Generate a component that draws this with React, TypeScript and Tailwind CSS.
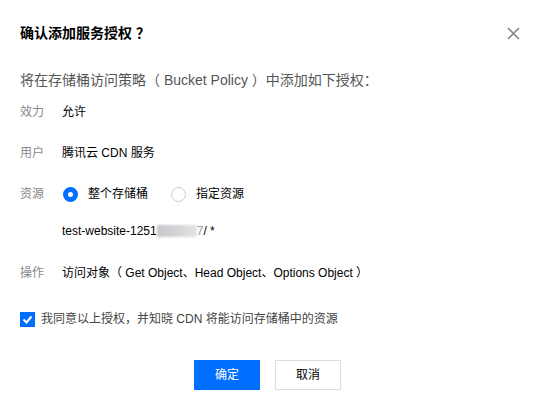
import React, { useState } from "react";

const font = { fontFamily: '"Liberation Sans", "Noto Sans CJK SC", sans-serif' };

function Radio({ checked, label, onClick }: { checked: boolean; label: string; onClick: () => void }) {
  return (
    <label className="flex items-center cursor-pointer" onClick={onClick}>
      <span
        className={
          checked
            ? "w-[15px] h-[15px] rounded-full border-[5px] border-[#006eff] bg-white"
            : "w-[15px] h-[15px] rounded-full border border-[#ccc] bg-white"
        }
      />
      <span className="ml-[10px] text-[12px] text-black">{label}</span>
    </label>
  );
}

export default function App() {
  const [scope, setScope] = useState("all");
  const [agree, setAgree] = useState(true);

  return (
    <div className="w-[542px] h-[407px] overflow-hidden bg-white px-5" style={font}>
      {/* header */}
      <div className="flex items-center justify-between h-5 mt-[23px]">
        <h3 className="text-[14px] font-bold text-black">确认添加服务授权 ？</h3>
        <button className="w-4 h-4 flex items-center justify-center mr-[1px] text-[#888]">
          <svg width="13" height="13" viewBox="0 0 13 13">
            <path d="M1 1L12 12M12 1L1 12" stroke="currentColor" strokeWidth="1.7" />
          </svg>
        </button>
      </div>

      <p className="h-5 flex items-center mt-[27px] text-[14px] text-[#555]">
        将在存储桶访问策略（ Bucket Policy ）中添加如下授权：
      </p>

      <div className="h-5 flex items-center mt-[12px] text-[12px]">
        <span className="w-[42px] text-[#888]">效力</span>
        <span className="text-black">允许</span>
      </div>

      <div className="h-5 flex items-center mt-[21px] text-[12px]">
        <span className="w-[42px] text-[#888]">用户</span>
        <span className="text-black">腾讯云 CDN 服务</span>
      </div>

      <div className="h-5 flex items-center mt-[21px] text-[12px]">
        <span className="w-[43px] text-[#888]">资源</span>
        <div className="flex items-center gap-[23px]">
          <Radio checked={scope === "all"} label="整个存储桶" onClick={() => setScope("all")} />
          <Radio checked={scope === "custom"} label="指定资源" onClick={() => setScope("custom")} />
        </div>
      </div>

      <div className="h-5 flex items-center mt-[17px] text-[12px] pl-[42px] text-black">
        test-website-1251
        <span className="inline-block w-[40px] h-[12px] bg-gradient-to-r from-[#c8c8cc] via-[#d4d4d8] to-[#e4e4e4] blur-[1px]" />
        <span className="text-[#999]">7</span>/ *
      </div>

      <div className="h-5 flex items-center mt-[22px] text-[12px]">
        <span className="w-[42px] text-[#888]">操作</span>
        <span className="text-black">访问对象（ Get Object、Head Object、Options Object ）</span>
      </div>

      <label className="h-5 flex items-center mt-[26px] cursor-pointer" onClick={() => setAgree(!agree)}>
        <span
          className={
            agree
              ? "w-[15px] h-[15px] bg-[#006eff] flex items-center justify-center"
              : "w-[15px] h-[15px] border border-[#ccc] bg-white"
          }
        >
          {agree && (
            <svg width="11" height="11" viewBox="0 0 11 11">
              <path d="M1.5 5.5L4.5 8.5L9.5 2.5" stroke="white" strokeWidth="2" fill="none" />
            </svg>
          )}
        </span>
        <span className="ml-[6px] text-[12px] text-[#444]">我同意以上授权，并知晓 CDN 将能访问存储桶中的资源</span>
      </label>

      <div className="flex justify-center gap-[15px] mt-[31px] pr-[7px]">
        <button className="w-[66px] h-[30px] bg-[#006eff] text-white text-[12px]">确定</button>
        <button className="w-[66px] h-[30px] border border-[#ddd] bg-white text-black text-[12px]">取消</button>
      </div>
    </div>
  );
}
